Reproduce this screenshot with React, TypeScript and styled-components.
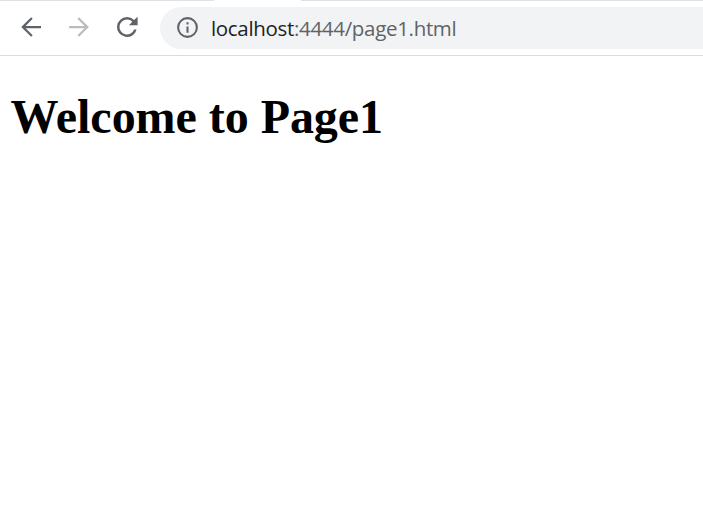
import React from "react";
import styled, { createGlobalStyle } from "styled-components";

const GlobalStyle = createGlobalStyle`
  body { margin: 0; background: #fff; overflow: hidden; }
`;

const Window = styled.div`
  width: 703px;
  height: 532px;
  overflow: hidden;
`;

const TabEdge = styled.div`
  display: grid;
  grid-template-columns: 214px 87px 1fr;
  height: 1px;
`;

const EdgeLine = styled.span<{ $active?: boolean }>`
  background: ${(p) => (p.$active ? "#fff" : "#dee1e6")};
`;

const Toolbar = styled.header`
  display: flex;
  align-items: center;
  height: 55px;
  box-sizing: border-box;
  padding: 0 0 1px 16px;
  border-bottom: 1px solid #dadce0;
`;

const NavButton = styled.button<{ $disabled?: boolean }>`
  display: flex;
  width: 30px;
  height: 30px;
  margin: 0 18px 1px 0;
  padding: 0;
  border: 0;
  background: none;
  color: ${(p) => (p.$disabled ? "#babcbe" : "#5f6368")};
`;

const AddressBar = styled.div`
  display: flex;
  align-items: center;
  flex: 1;
  height: 42px;
  padding-left: 15px;
  border-radius: 21px 0 0 21px;
  background: #f1f3f4;
  color: #5f6368;
`;

const Url = styled.span`
  margin-left: 11px;
  font: 20.5px/28px "Open Sans", "Noto Sans", sans-serif;
  letter-spacing: -0.32px;
  white-space: nowrap;
`;

const Host = styled.span`
  color: #202124;
`;

const Heading = styled.h1`
  margin: 33px 0 0 10.5px;
  font: bold 48px/56px "Liberation Serif", "Times New Roman", serif;
  letter-spacing: -0.04px;
  color: #000;
`;

const Icon = ({ path, size = 30 }: { path: string; size?: number }) => (
  <svg width={size} height={size} viewBox="0 0 24 24" fill="currentColor">
    <path d={path} />
  </svg>
);

const back = "M20 11.1H7.7l5.65-5.65L12.1 4.2 4.2 12l7.9 7.8 1.25-1.25L7.7 12.9H20z";
const forward = "M12 4.2l-1.25 1.25L16.4 11.1H4.1v1.8h12.3l-5.65 5.65L12 19.8l7.9-7.8z";
const reload =
  "M17.65 6.35A7.96 7.96 0 0 0 12 4a8 8 0 1 0 7.73 10h-2.08A6 6 0 1 1 12 6c1.66 0 3.14.69 4.22 1.78L13.5 10.5H20.5V3.8z";
const info =
  "M11 17h2v-6h-2zm1-15a10 10 0 1 0 0 20 10 10 0 0 0 0-20zm0 18a8 8 0 1 1 0-16 8 8 0 0 1 0 16zM11 9h2V7h-2z";

export default function App() {
  return (
    <Window>
      <GlobalStyle />
      <TabEdge>
        <EdgeLine />
        <EdgeLine $active />
        <EdgeLine />
      </TabEdge>
      <Toolbar>
        <NavButton aria-label="Back"><Icon path={back} /></NavButton>
        <NavButton aria-label="Forward" $disabled><Icon path={forward} /></NavButton>
        <NavButton aria-label="Reload"><Icon path={reload} /></NavButton>
        <AddressBar>
          <Icon path={info} size={25} />
          <Url><Host>localhost</Host>:4444/page1.html</Url>
        </AddressBar>
      </Toolbar>
      <Heading>Welcome to Page1</Heading>
    </Window>
  );
}
